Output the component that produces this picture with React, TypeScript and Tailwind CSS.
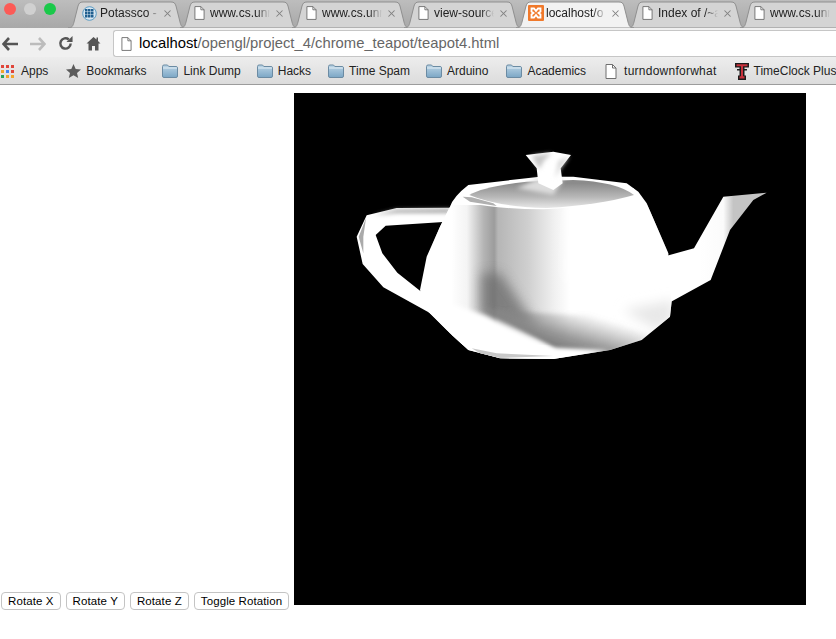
import React from 'react';
import { X } from 'lucide-react';

const PageIcon = ({ className = '' }: { className?: string }) => (
  <svg viewBox="0 0 12 15" className={className} fill="#fff" stroke="#6f6f6f" strokeWidth="1">
    <path d="M1 .5h6.500L11 4v10.500H1z" />
    <path d="M7.500.5V4H11" fill="none" />
  </svg>
);

const PotasscoIcon = () => (
  <svg viewBox="0 0 15 15" className="w-[15px] h-[15px] shrink-0">
    <circle cx="7.500" cy="7.500" r="6.800" fill="#d8e6f0" stroke="#5a9cc4" strokeWidth="1" />
    {[3, 6, 9].map((y) =>
      [3, 6, 9].map((x) => <rect key={`${x}-${y}`} x={x} y={y} width="2.500" height="2.500" fill="#1f5f8f" />)
    )}
  </svg>
);

const XamppIcon = () => (
  <svg viewBox="0 0 16 16" className="w-[16px] h-[16px] shrink-0 -ml-[2px] -mr-[1px]">
    <rect width="16" height="16" rx="1" fill="#f0792b" />
    <path d="M3.500 3.500h2.500L8 6l2-2.500h2.500v3L10.500 8l2 1.500v3H10L8 10l-2 2.500H3.500v-3L5.500 8l-2-1.500z" fill="none" stroke="#fff" strokeWidth="1.800" />
  </svg>
);

const FolderIcon = () => (
  <svg viewBox="0 0 16 14" className="w-[16px] h-[14px] shrink-0">
    <defs>
      <linearGradient id="folderFill" x1="0" y1="0" x2="0" y2="1">
        <stop offset="0" stopColor="#bcd5e6" />
        <stop offset="1" stopColor="#7ba6c5" />
      </linearGradient>
    </defs>
    <path d="M.5 2.500q0-1.500 1.500-1.500h3.500l1.300 1.500H14q1.500 0 1.500 1.500v8q0 1.500-1.500 1.500H2q-1.500 0-1.500-1.500z" fill="url(#folderFill)" stroke="#6b8ba3" />
    <path d="M1 4h14" stroke="#e3eef5" />
  </svg>
);

const AppsIcon = () => (
  <svg viewBox="0 0 13 13" className="w-[13px] h-[13px] shrink-0">
    {['#e0453a', '#e0453a', '#e0453a', '#f2a32c', '#4285f4', '#e0453a', '#27a35a', '#f2a32c', '#f2a32c'].map((c, i) => (
      <rect key={i} x={(i % 3) * 5} y={Math.floor(i / 3) * 5} width="3" height="3" fill={c} />
    ))}
  </svg>
);

const StarIcon = () => (
  <svg viewBox="0 0 15 14" className="w-[15px] h-[14px] shrink-0">
    <path d="M7.500 0l2.200 4.900 5.300.5-4 3.500 1.200 5.100-4.700-2.700L2.800 14 4 8.900 0 5.400l5.300-.5z" fill="#5c5c5c" />
  </svg>
);

const TechIcon = () => (
  <svg viewBox="0 0 14 17" className="w-[14px] h-[17px] shrink-0">
    <path d="M0 0h14v4.500H9.500v8H11V17H3v-4.500h1.500v-8H0z" fill="#1c1c1c" />
    <path d="M1.500 1.200h11v2h-4.500v10h1.500v2.400h-5v-2.400h1.500v-10H1.500z" fill="#c8323c" />
    <path d="M2 6h3v1.500H2zM9 6h3v1.500H9z" fill="#1c1c1c" />
  </svg>
);

const tabPage = <PageIcon className="w-[11px] h-[14px] shrink-0 mr-[2px]" />;

const tabs = [
  { title: 'Potassco -', icon: <PotasscoIcon /> },
  { title: 'www.cs.unr', icon: tabPage },
  { title: 'www.cs.unr', icon: tabPage },
  { title: 'view-source', icon: tabPage },
  { title: 'localhost/o', icon: <XamppIcon />, active: true },
  { title: 'Index of /~a', icon: tabPage },
  { title: 'www.cs.unr', icon: tabPage },
];

const Tab = ({ title, icon, active }: { title: string; icon: React.ReactNode; active?: boolean }) => (
  <div className={`relative w-[112px] h-[27px] shrink-0 ${active ? 'z-10' : ''}`}>
    <svg viewBox="0 0 118 27" className="absolute left-0 top-0 w-[118px] h-[27px]">
      <path
        d="M0 27C4 27 5 25 6 21L10 5C11 2 12 1 15 1H103C106 1 107 2 108 5L112 21C113 25 114 27 118 27Z"
        fill={active ? '#f2f2f2' : '#d4d4d4'}
        stroke="#8f8f8f"
      />
    </svg>
    <div className="absolute left-[14px] top-[4px] flex items-center w-[100px]">
      {icon}
      <span className="ml-[3px] w-[60px] overflow-hidden whitespace-nowrap text-[12px] leading-[16px] text-[#222] [mask-image:linear-gradient(to_right,black_78%,transparent)]">
        {title}
      </span>
      <X className="absolute right-[9px] top-[3px] w-[11px] h-[11px] text-[#808080]" strokeWidth={2.25} />
    </div>
  </div>
);

const Bookmark = ({ icon, label, className = '' }: { icon: React.ReactNode; label: string; className?: string }) => (
  <div className={`flex items-center whitespace-nowrap shrink-0 ${className}`}>
    {icon}
    <span className="ml-[5px]">{label}</span>
  </div>
);

const bodyPath =
  'M330 200Q340 170 385 135L600 110L700 110L860 130L895 155L920 190L985 340L985 420L995 485L990 530L905 600L810 630L640 657L480 655L385 630L330 580L265 515L240 450L260 350L300 260Z';

const Teapot = () => (
  <svg viewBox="0 0 1320 690" className="w-[440px] h-[230px] ml-[46px] mt-[47px] block">
    <defs>
      <filter id="soft" filterUnits="userSpaceOnUse" x="0" y="0" width="1320" height="690">
        <feGaussianBlur stdDeviation="18" />
      </filter>
      <filter id="mid" filterUnits="userSpaceOnUse" x="0" y="0" width="1320" height="690">
        <feGaussianBlur stdDeviation="6" />
      </filter>
      <filter id="edge" filterUnits="userSpaceOnUse" x="0" y="0" width="1320" height="690">
        <feGaussianBlur stdDeviation="1.200" />
      </filter>
      <clipPath id="bodyClip">
        <path d={bodyPath} />
      </clipPath>
      <linearGradient id="bodyShade" x1="330" y1="0" x2="720" y2="0" gradientUnits="userSpaceOnUse">
        <stop offset="0" stopColor="#fff" />
        <stop offset="0.13" stopColor="#f4f4f4" />
        <stop offset="0.26" stopColor="#b4b4b4" />
        <stop offset="0.34" stopColor="#9c9c9c" />
        <stop offset="0.37" stopColor="#b6b6b6" />
        <stop offset="0.6" stopColor="#cfcfcf" />
        <stop offset="0.8" stopColor="#f0f0f0" />
        <stop offset="0.92" stopColor="#fff" />
      </linearGradient>
      <linearGradient id="lowShade" x1="640" y1="490" x2="600" y2="625" gradientUnits="userSpaceOnUse">
        <stop offset="0" stopColor="#8a8a8a" stopOpacity="0" />
        <stop offset="0.6" stopColor="#808080" stopOpacity="0.8" />
        <stop offset="1" stopColor="#6e6e6e" />
      </linearGradient>
      <linearGradient id="lidShade" x1="0" y1="130" x2="0" y2="205" gradientUnits="userSpaceOnUse">
        <stop offset="0" stopColor="#8b8b8b" />
        <stop offset="0.55" stopColor="#b8b8b8" />
        <stop offset="1" stopColor="#e8e8e8" />
      </linearGradient>
      <linearGradient id="spoutShade" x1="1080" y1="0" x2="1180" y2="0" gradientUnits="userSpaceOnUse">
        <stop offset="0" stopColor="#fff" />
        <stop offset="0.7" stopColor="#fbfbfb" />
        <stop offset="1" stopColor="#c4c4c4" />
      </linearGradient>
    </defs>
    {/* handle */}
    <path
      d="M345 203L170 204L80 226L50 290L68 372L130 442L290 530L300 480L240 452L172 398L127 340L107 285L137 257L345 244Z"
      fill="#fff"
      filter="url(#edge)"
    />
    <path d="M330 207L170 209L100 226L170 218L330 218Z" fill="#999" filter="url(#mid)" />
    <path d="M78 235L56 290L70 340L70 290Z" fill="#aaa" filter="url(#edge)" />
    {/* spout */}
    <path
      d="M970 350L1062 325L1150 170L1280 158L1240 180L1170 270L1112 420L985 490Z"
      fill="url(#spoutShade)"
      filter="url(#edge)"
    />
    {/* body */}
    <path d={bodyPath} fill="#fff" filter="url(#edge)" />
    <g clipPath="url(#bodyClip)">
      <rect x="335" y="195" width="400" height="420" fill="url(#bodyShade)" filter="url(#edge)" />
      <path d="M425 400L480 400L590 560L425 520Z" fill="#6c6c6c" opacity="0.75" filter="url(#soft)" />
      <path d="M690 200L940 200L1000 440L1000 490L820 525L740 490L680 400Z" fill="#fff" filter="url(#soft)" />
      <path d="M425 510L720 525L1000 495L1000 540L905 605L810 640L650 630Z" fill="url(#lowShade)" filter="url(#mid)" />
      <path d="M850 510L1000 480L1000 540L950 570Z" fill="#e8e8e8" filter="url(#soft)" />
      <path d="M240 490L345 495L432 525L640 625L805 632L640 670L400 670Z" fill="#fff" filter="url(#mid)" />
      <path d="M300 200L340 200L335 520L250 520Z" fill="#fff" filter="url(#mid)" />
    </g>
    <path d="M395 625L470 640L640 648L480 654L420 640Z" fill="#c8c8c8" filter="url(#edge)" />
    {/* rim and lid */}
    <path d="M362 165Q370 185 385 188Q470 207 610 208Q780 200 897 165L880 145L830 130L390 150Z" fill="#fff" />
    <path d="M368 170L390 185L470 198L460 190L395 172Z" fill="#b0b0b0" filter="url(#edge)" />
    <path
      d="M388 165Q430 140 560 125L700 120Q830 125 882 165Q780 195 620 204Q470 200 388 165Z"
      fill="url(#lidShade)"
      filter="url(#edge)"
    />
    <path d="M530 145L590 118L670 118L640 165Z" fill="#dcdcdc" filter="url(#mid)" />
    {/* knob */}
    <path d="M557 45L640 35L693 45L662 85L668 130L640 150L595 130L590 85Z" fill="#fff" filter="url(#edge)" />
    <path d="M575 47L635 40L612 62L598 88Z" fill="#c8c8c8" filter="url(#mid)" />
    <path d="M655 62L688 48L662 85L645 115Z" fill="#d8d8d8" filter="url(#mid)" />
  </svg>
);

const App = () => {
  return (
    <div className="min-h-screen bg-white font-['Liberation_Sans',Arial,sans-serif] text-[#222]">
      {/* browser chrome */}
      <div className="h-[85px] border-b border-[#9c9c9c]">
        <div className="h-[28px] bg-gradient-to-b from-[#bdbdbd] to-[#a8a8a8] flex items-end overflow-hidden relative">
          <div className="flex items-center gap-[8px] absolute left-[4px] top-[3px]">
            <div className="w-[12px] h-[12px] rounded-full bg-[#fc5b57]" />
            <div className="w-[12px] h-[12px] rounded-full bg-[#d0d0d0]" />
            <div className="w-[12px] h-[12px] rounded-full bg-[#1ac94a]" />
          </div>
          <div className="flex pl-[68px]">
            {tabs.map((t, i) => (
              <Tab key={i} title={t.title} icon={t.icon} active={t.active} />
            ))}
          </div>
        </div>
        <div className="h-[29px] bg-[#f0f0f0] flex items-center pt-[2px]">
          <svg viewBox="0 0 16 14" className="w-[16px] h-[14px] ml-[2px] shrink-0">
            <path d="M7 1L1.500 7L7 13M2 7H16" fill="none" stroke="#555" strokeWidth="2.600" />
          </svg>
          <svg viewBox="0 0 16 14" className="w-[16px] h-[14px] ml-[12px] shrink-0">
            <path d="M9 1L14.500 7L9 13M14 7H0" fill="none" stroke="#bcbcbc" strokeWidth="2.600" />
          </svg>
          <svg viewBox="0 0 16 16" className="w-[15px] h-[15px] ml-[12px] shrink-0">
            <path d="M13.500 8A5.500 5.500 0 1 1 11.500 3.700" fill="none" stroke="#555" strokeWidth="2.600" />
            <path d="M9 6.500H15.500V0z" fill="#555" />
          </svg>
          <svg viewBox="0 0 15 15" className="w-[15px] h-[15px] ml-[13px] shrink-0">
            <path d="M7.500 1L0.500 7.500H2.500V14.500H6V10H9V14.500H12.500V7.500H14.500L12 5V1.500H10.500V3.500z" fill="#555" />
          </svg>
          <div className="ml-[12px] flex-1 h-[27px] bg-white border border-r-0 border-[#c6c6c6] rounded-l-[3px] flex items-center pl-[7px]">
            <PageIcon className="w-[11px] h-[14px] shrink-0" />
            <span className="ml-[7px] text-[14.8px] text-[#666] whitespace-nowrap">
              <span className="text-black">localhost</span>/opengl/project_4/chrome_teapot/teapot4.html
            </span>
          </div>
        </div>
        <div className="h-[27px] bg-gradient-to-b from-[#ededed] to-[#dcdcdc] flex items-center text-[12px] pt-[1px] overflow-hidden pl-[1px]">
          <Bookmark icon={<AppsIcon />} label="Apps" className="[&>span]:ml-[7px]" />
          <Bookmark icon={<StarIcon />} label="Bookmarks" className="ml-[18px]" />
          <Bookmark icon={<FolderIcon />} label="Link Dump" className="ml-[16px]" />
          <Bookmark icon={<FolderIcon />} label="Hacks" className="ml-[16px]" />
          <Bookmark icon={<FolderIcon />} label="Time Spam" className="ml-[17px]" />
          <Bookmark icon={<FolderIcon />} label="Arduino" className="ml-[16px]" />
          <Bookmark icon={<FolderIcon />} label="Academics" className="ml-[18px]" />
          <Bookmark icon={<PageIcon className="w-[12px] h-[15px] shrink-0" />} label="turndownforwhat" className="ml-[19px] [&>span]:ml-[7px] [&>span]:tracking-[0.25px]" />
          <Bookmark icon={<TechIcon />} label="TimeClock Plus" className="ml-[18px]" />
        </div>
      </div>
      {/* page */}
      <div className="flex h-[517px] mt-[8px]">
        <div className="w-[294px] shrink-0 self-end flex gap-[5px] pl-[1px]">
          {['Rotate X', 'Rotate Y', 'Rotate Z', 'Toggle Rotation'].map((label) => (
            <button
              key={label}
              className="h-[18px] px-[6px] pt-[1px] bg-white border border-[#c4c4c4] rounded-[4px] text-[11.5px] tracking-[0.1px] leading-none text-black whitespace-nowrap"
            >
              {label}
            </button>
          ))}
        </div>
        <div className="w-[512px] h-[512px] bg-black overflow-hidden">
          <Teapot />
        </div>
      </div>
    </div>
  );
};

export default App;
